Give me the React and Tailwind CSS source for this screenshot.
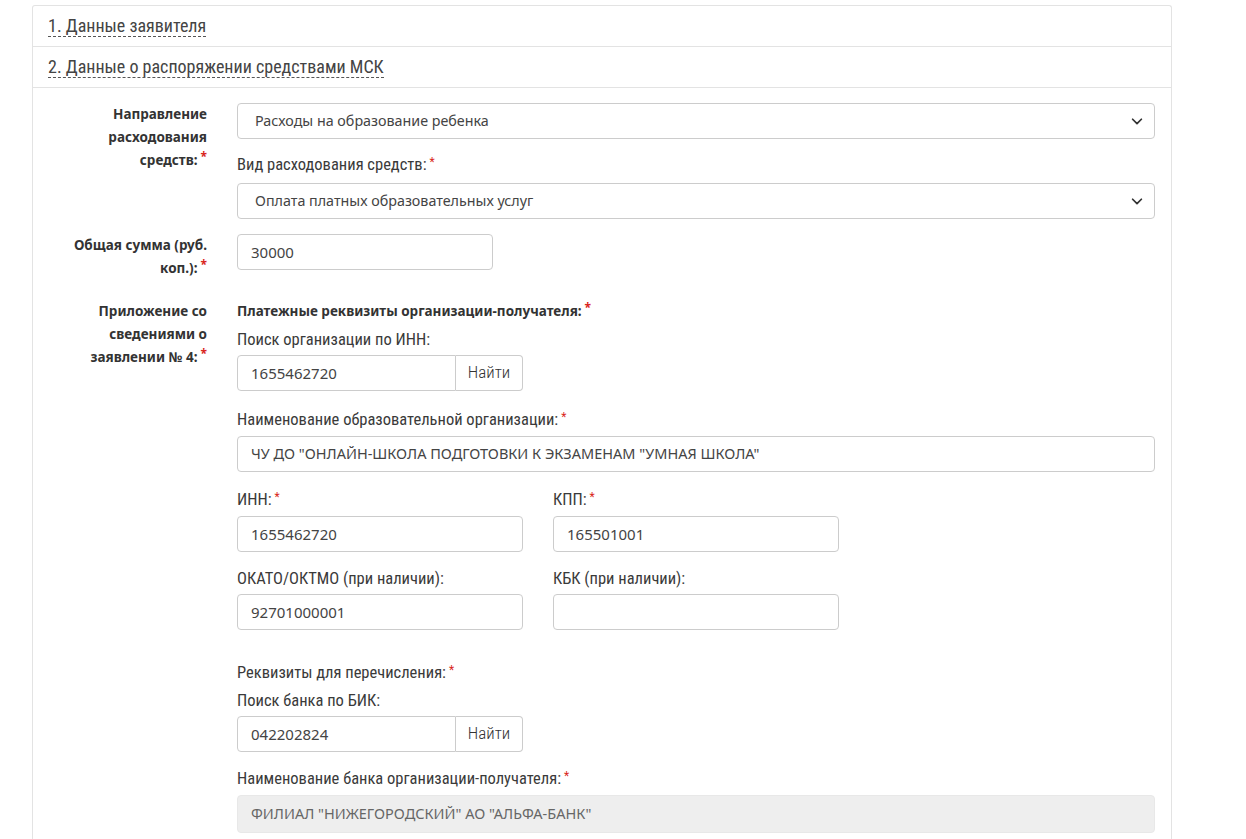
import React from 'react';

const narrow = "font-['Liberation_Sans_Narrow','Roboto_Condensed','DejaVu_Sans_Condensed',Roboto,sans-serif]";
const body = "font-['Noto_Sans','Open_Sans',sans-serif]";

const Req = () => <span className="text-[#d9261c] text-[12px] relative -top-[4px] ml-[3px]">*</span>;

const Input = ({ value = '', className = '', disabled = false }) => (
    <div
        className={`h-[36px] border border-[#ccc] rounded-[4px] px-[13px] flex items-center text-[15px] ${body} ${disabled ? 'bg-[#eee] text-[#666]' : 'bg-white text-[#444]'} ${className}`}
    >
        {value}
    </div>
);

const Select = ({ value }) => (
    <div className={`h-[36px] border border-[#ccc] rounded-[4px] pl-[17px] pr-[10px] flex items-center justify-between text-[14.3px] text-[#444] bg-white ${body}`}>
        <span>{value}</span>
        <svg width="14" height="14" viewBox="0 0 16 16" fill="none" stroke="#333" strokeWidth="2" strokeLinecap="round" strokeLinejoin="round">
            <path d="M3 6l5 5 5-5" />
        </svg>
    </div>
);

const SearchGroup = ({ value }) => (
    <div className={`flex w-[286px] h-[36px] text-[15px] text-[#444] ${body}`}>
        <div className="flex-1 border border-[#ccc] rounded-l-[4px] px-[13px] flex items-center">{value}</div>
        <div className={`w-[67px] border border-l-0 border-[#ccc] rounded-r-[4px] flex items-center justify-center ${narrow} font-light text-[17px] text-[#333]`}>Найти</div>
    </div>
);

const Label = ({ children, className = '' }) => (
    <div className={`${narrow} text-[16.5px] text-[#3a3a3a] leading-[20px] mb-[5px] ${className}`}>{children}</div>
);

const SideLabel = ({ lines }) => (
    <div className={`w-[174px] shrink-0 pl-[15px] text-right ${body} font-bold text-[13.5px] leading-[23px] text-[#333]`}>
        {lines.map((l, i) => (
            <div key={i}>
                {l}
                {i === lines.length - 1 && <Req />}
            </div>
        ))}
    </div>
);

export default function App() {
    return (
        <div className="min-h-screen bg-white pt-[5px]">
            <div className="ml-[32px] w-[1140px] border border-[#e3e3e3] border-b-0 rounded-t-[3px] text-[#333]">
                {/* Accordion headers */}
                <div className="h-[41px] px-[15px] flex items-center border-b border-[#e3e3e3]">
                    <span className={`${narrow} font-normal text-[18px] text-[#444] border-b border-dashed border-[#555] leading-[20px]`}>1. Данные заявителя</span>
                </div>
                <div className="h-[41px] px-[15px] flex items-center border-b border-[#e3e3e3]">
                    <span className={`${narrow} font-normal text-[18px] text-[#444] border-b border-dashed border-[#555] leading-[20px]`}>2. Данные о распоряжении средствами МСК</span>
                </div>

                {/* Body */}
                <div className="pt-[15px] pr-[16px] pb-[10px]">
                    <div className="flex gap-[30px]">
                        <SideLabel lines={['Направление', 'расходования', 'средств:']} />
                        <div className="flex-1">
                            <Select value="Расходы на образование ребенка" />
                            <Label className="mt-[16px] !mb-[7px]">Вид расходования средств:<Req /></Label>
                            <Select value="Оплата платных образовательных услуг" />
                        </div>
                    </div>

                    <div className="flex gap-[30px] mt-[15px]">
                        <SideLabel lines={['Общая сумма (руб.', 'коп.):']} />
                        <div className="flex-1">
                            <Input value="30000" className="w-[256px]" />
                        </div>
                    </div>

                    <div className="flex gap-[30px] mt-[20px]">
                        <SideLabel lines={['Приложение со', 'сведениями о', 'заявлении № 4:']} />
                        <div className="flex-1">
                            <div className={`${body} font-bold text-[13.5px] leading-[22px] text-[#333] mb-[7px]`}>
                                Платежные реквизиты организации-получателя:<Req />
                            </div>
                            <Label>Поиск организации по ИНН:</Label>
                            <SearchGroup value="1655462720" />

                            <Label className="mt-[19px]">Наименование образовательной организации:<Req /></Label>
                            <Input value={'ЧУ ДО "ОНЛАЙН-ШКОЛА ПОДГОТОВКИ К ЭКЗАМЕНАМ "УМНАЯ ШКОЛА"'} className={narrow + ' !text-[14.5px]'} />

                            <div className="grid grid-cols-[286px_286px] gap-x-[30px] mt-[18px]">
                                <div>
                                    <Label>ИНН:<Req /></Label>
                                    <Input value="1655462720" />
                                </div>
                                <div>
                                    <Label>КПП:<Req /></Label>
                                    <Input value="165501001" />
                                </div>
                                <div className="mt-[17px]">
                                    <Label>ОКАТО/ОКТМО (при наличии):</Label>
                                    <Input value="92701000001" />
                                </div>
                                <div className="mt-[17px]">
                                    <Label>КБК (при наличии):</Label>
                                    <Input value="" />
                                </div>
                            </div>

                            <Label className="mt-[33px] !mb-[7px]">Реквизиты для перечисления:<Req /></Label>
                            <Label>Поиск банка по БИК:</Label>
                            <SearchGroup value="042202824" />

                            <Label className="mt-[17px]">Наименование банка организации-получателя:<Req /></Label>
                            <Input value={'ФИЛИАЛ "НИЖЕГОРОДСКИЙ" АО "АЛЬФА-БАНК"'} disabled className={narrow + ' !text-[14.5px] !h-[38px] !border-[#e8e8e8]'} />
                        </div>
                    </div>
                </div>
            </div>
        </div>
    );
}
